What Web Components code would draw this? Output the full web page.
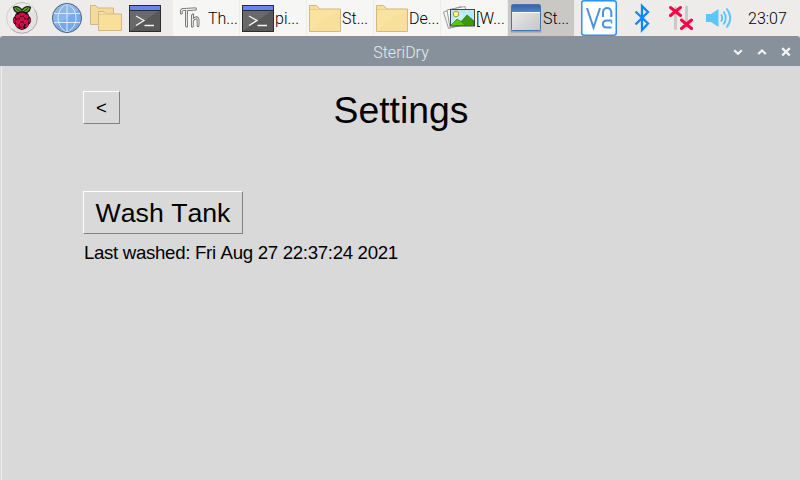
<!DOCTYPE html>
<html lang="en"><head><meta charset="utf-8"><title>SteriDry</title>
<style>html,body{margin:0;height:100%;overflow:hidden;background:#d9d9d9}</style></head>
<body><desk-screen></desk-screen>
<script>
const define=(name,html)=>{const t=document.createElement('template');t.innerHTML=html;
 customElements.define(name,class extends HTMLElement{constructor(){super();this.attachShadow({mode:'open'}).append(t.content.cloneNode(true));}});};

const folder='<path d="M1.5 5.5H8.5L12 9H32.5V31.5H1.5Z" fill="#f8e09b" stroke="#d3b782"/><path d="M2 9.5H11.5" stroke="#e7cd8a"/><path d="M2 31V10H32L12 21Z" fill="#fae5a5" opacity=".6"/>';
const icons={
raspberry:[32,34,`<circle cx="16" cy="17" r="15.3" fill="#e2e2e2" stroke="#aaa"/><path d="M5 28A15 15 0 0 1 16 2A15 15 0 0 1 29 8Z" fill="#f1f1f1" opacity=".6"/><g transform="translate(0 -1)">
<path d="M16 10C13 6 9 6 7.500 7.500C8 12 12 13.500 16 12.500C20 13.500 24 12 24.500 7.500C23 6 19 6 16 10Z" fill="#5ea52c" stroke="#172012" stroke-width="1.300"/><path d="M10 8.500L15 12L16 11L17 12L22 8.500" fill="none" stroke="#203516"/>
<path d="M16 12C20 11 23 14 23 16C26 18 25.500 23 23 24.500C22 28 18 29.500 16 30C14 29.500 10 28 9 24.500C6.500 23 6 18 9 16C9 14 12 11 16 12Z" fill="#1e0710"/>
<g fill="#d20e49"><ellipse cx="16" cy="14.300" rx="3" ry="1.700"/><ellipse cx="11.800" cy="16.500" rx="2.500" ry="2" transform="rotate(-35 11.800 16.500)"/><ellipse cx="20.200" cy="16.500" rx="2.500" ry="2" transform="rotate(35 20.200 16.500)"/><circle cx="16" cy="18.900" r="2.500"/><circle cx="12.200" cy="21.700" r="2.500"/><circle cx="19.800" cy="21.700" r="2.500"/><ellipse cx="8.400" cy="20.400" rx="1.200" ry="2.400"/><ellipse cx="23.600" cy="20.400" rx="1.200" ry="2.400"/><circle cx="16" cy="24.700" r="2.200"/><ellipse cx="11.300" cy="25.600" rx="1.500" ry="1.900" transform="rotate(-35 11.300 25.600)"/><ellipse cx="20.700" cy="25.600" rx="1.500" ry="1.900" transform="rotate(35 20.700 25.600)"/><ellipse cx="16" cy="28.300" rx="2" ry="1"/></g></g>`],
globe:[32,36,`<circle cx="16" cy="18" r="14.500" fill="#78a9e6"/><path d="M4 26A14.500 14.500 0 0 1 16 3.500A14.500 14.500 0 0 1 28 10Z" fill="#8cb5e8"/><path d="M16 3.500V32.500M2 13.500H30M2 22.500H30M16 3.500C4 10 4 26 16 32.500C28 26 28 10 16 3.500" fill="none" stroke="#d9e8fa"/><circle cx="16" cy="18" r="14.600" fill="none" stroke="#52677f"/>`],
folders:[34,36,`<path d="M1.500 5.500H6.500L9 8H24.500V24.500H1.500Z" fill="#f3dc9b" stroke="#d3b782"/><path d="M9.500 11.500H15L17.500 14H32.500V30.500H9.500Z" fill="#f8e09b" stroke="#d3b782"/><path d="M10 14.500H17" stroke="#e7cd8a"/>`],
folder:[34,36,folder],
terminal:[34,36,`<rect x="1.500" y="5.500" width="31" height="26" fill="#585858" stroke="#2c2c2c"/><path d="M2 10H32L2 31Z" fill="#696969"/><rect x="2" y="6" width="30" height="4" fill="#6686ed"/><path d="M2 10.500H32" stroke="#282a38"/><path d="M8 16L16 20.500L8 25.500M16.500 25.500H26" fill="none" stroke="#f4f4f4" stroke-width="1.300"/>`],
thonny:[34,36,`<g fill="none" stroke-linecap="round" stroke-linejoin="round" transform="translate(.3 0) scale(.88 1)"><path d="M8 13C7 10 9 9.500 11 9.500L24 9M14.500 10C13 14 13.500 20 14 26M21 15C20 18 20.500 22 20.500 26M20.500 21C23 17 27 17 27 20V25.500" stroke="#555" stroke-width="3"/><path d="M8 13C7 10 9 9.500 11 9.500L24 9M14.500 10C13 14 13.500 20 14 26M21 15C20 18 20.500 22 20.500 26M20.500 21C23 17 27 17 27 20V25.500" stroke="#f1f1ef" stroke-width="1.300"/></g>`],
photos:[34,36,`<path d="M1.500 12L19 6.500L24 24L6.500 28.500Z" fill="#f5f5f5" stroke="#999"/><path d="M5 10L23 6.500L26 24L8 27.500Z" fill="#fff" stroke="#999"/><rect x="8.500" y="9.500" width="24" height="16.500" fill="#b8e9fc" stroke="#444"/><path d="M9 21L18 12L32 25.500H9Z" fill="#c6effb"/><circle cx="14" cy="14" r="2.800" fill="#fff48e" stroke="#a8943b"/><path d="M16 25L25 15L32 21V25.500H14Z" fill="#3c9a0c" stroke="#245b0b" stroke-width=".6"/><path d="M9 25L15 19L20 22L23 25.500H9Z" fill="#5bc313" stroke="#2d6e0c" stroke-width=".6"/>`],
window:[34,36,`<defs><linearGradient id="b" x2="0" y2="1"><stop stop-color="#3465a4"/><stop offset="1" stop-color="#4e84c7"/></linearGradient><linearGradient id="g" x2="1" y2="1"><stop stop-color="#f0f0f0"/><stop offset="1" stop-color="#c5c5c5"/></linearGradient></defs><rect x="1.500" y="29.500" width="31" height="3" rx="1.500" fill="#888" opacity=".65"/><rect x="2.500" y="4.500" width="29" height="26" rx="1" fill="url(#g)" stroke="#4775ad"/><rect x="3" y="5" width="28" height="7" fill="url(#b)"/><path d="M3 12.500H31" stroke="#fff"/>`],
vnc:[36,36,`<rect x=".75" y=".75" width="34.500" height="34.500" rx="2.500" fill="#fff" stroke="#2f8ff5" stroke-width="1.500"/><path d="M6 8L12.500 27.500L19 8M22 17V12.500C22 6.500 30.300 6.500 30.300 12.500V17M30.500 20.500H26C20.500 20.500 20.500 27.500 26 27.500H30.500" fill="none" stroke="#4a93dc" stroke-width="2"/><path d="M30.500 20.500V23.500" fill="none" stroke="#4a93dc" stroke-width="1.500"/>`],
bluetooth:[18,36,`<path d="M2.500 11.500L15 23.500L9 30V6L15 12L2.500 24.500" fill="none" stroke="#0d86ff" stroke-width="2.300"/>`],
network:[26,36,`<path d="M8.500 8V28.500M19.500 7V27" stroke="#c9c9c9" stroke-width="3" stroke-linecap="round"/><path d="M3.500 7.500L13.500 15.500M13.500 7.500L3.500 15.500M14.500 20L24.500 28.500M24.500 20L14.500 28.500" stroke="#ff0048" stroke-width="3" stroke-linecap="round"/>`],
volume:[28,36,`<path d="M1 14H6L13.500 9V27L6 22H1Z" fill="#5cc6fb"/><path d="M16 14.500Q18.500 18 16 21.500M18.500 11.500Q23 18 18.500 24.500M21.500 8.500Q29 18 21.500 27.500" fill="none" stroke="#5cc6fb" stroke-width="1.900"/>`],
down:[12,12,'<path d="M2.200 5.200L6 8.700L9.800 5.200" fill="none" stroke="#f4f4f4" stroke-width="2.200"/>'],
up:[12,12,'<path d="M2.200 9L6 5.500L9.800 9" fill="none" stroke="#f4f4f4" stroke-width="2.200"/>'],
close:[12,12,'<path d="M2.200 3.200L9.800 10.500M9.800 3.200L2.200 10.500" stroke="#f4f4f4" stroke-width="2.300"/>']
};
customElements.define('ui-icon',class extends HTMLElement{constructor(){super();this.attachShadow({mode:'open'});}
 connectedCallback(){const [w,h,m]=icons[this.getAttribute('name')];
 this.shadowRoot.innerHTML=`<style>:host{display:block;flex:none}svg{display:block}</style><svg width="${w}" height="${h}" viewBox="0 0 ${w} ${h}" fill="none">${m}</svg>`;}});

define('task-button',`<style>:host{display:flex;align-items:center;box-sizing:border-box;width:67px;height:36px;padding-left:1px;background:#f6f6f5;border-right:1px solid #ececea;white-space:nowrap;overflow:hidden}:host([active]){width:66px;background:#c9c8c5;border-color:#c9c8c5}span{padding-top:1px}</style><slot name="icon"></slot><span><slot></slot></span>`);
define('task-bar',`<style>
:host{display:flex;height:36px;background:#edecea;font:300 16px/36px Roboto,sans-serif;color:#000}
.launch{display:flex;align-items:center;width:173px;box-sizing:border-box;padding-left:6px}
.globe{margin-left:13px}.folders{margin-left:6px}.term{margin-left:5px}
.tray{display:flex;align-items:center;padding-left:7px}
.bt{margin-left:16px}.net{margin-left:16px}.vol{margin-left:12px}.clock{margin-left:15px;padding-top:1px}
</style>
<div class="launch"><ui-icon name="raspberry"></ui-icon><ui-icon class="globe" name="globe"></ui-icon><ui-icon class="folders" name="folders"></ui-icon><ui-icon class="term" name="terminal"></ui-icon></div>
<task-button><ui-icon slot="icon" name="thonny"></ui-icon>Th...</task-button>
<task-button><ui-icon slot="icon" name="terminal"></ui-icon>pi...</task-button>
<task-button><ui-icon slot="icon" name="folder"></ui-icon>St...</task-button>
<task-button><ui-icon slot="icon" name="folder"></ui-icon>De...</task-button>
<task-button><ui-icon slot="icon" name="photos"></ui-icon>[W...</task-button>
<task-button active><ui-icon slot="icon" name="window"></ui-icon>St...</task-button>
<div class="tray"><ui-icon name="vnc"></ui-icon><ui-icon class="bt" name="bluetooth"></ui-icon><ui-icon class="net" name="network"></ui-icon><ui-icon class="vol" name="volume"></ui-icon><span class="clock">23:07</span></div>`);
define('title-bar',`<style>:host{display:grid;grid-template-columns:1fr auto 1fr;align-items:center;height:30px;background:#87919b;border-radius:3px 3px 0 0;color:#e9ebed;font:300 16px/30px Roboto,sans-serif}
.title{grid-column:2;padding:3px 0 0 2px;line-height:27px}.controls{display:flex;gap:12px;justify-content:flex-end;padding-right:8px}</style>
<span class="title"><slot></slot></span><div class="controls"><ui-icon name="down"></ui-icon><ui-icon name="up"></ui-icon><ui-icon name="close"></ui-icon></div>`);
define('push-button',`<style>:host{display:block}button{display:block;box-sizing:border-box;width:100%;height:100%;margin:0;padding:var(--drop,0) 0 0;border:1px solid;border-color:#fff #828282 #828282 #fff;background:#d9d9d9;color:#000;font:inherit;font-kerning:inherit;box-shadow:none}</style><button><slot></slot></button>`);
define('settings-view',`<style>
:host{display:block;box-sizing:border-box;height:414px;padding:25px 81px 0 82px;border-left:1px solid #d9d9d9;box-shadow:inset 1px 0 #eee;font-family:"Liberation Sans",Arial,sans-serif;font-kerning:none;color:#000;background:#d9d9d9}
header{display:grid;grid-template-columns:37px 1fr 37px;align-items:start}
.back{height:33px;font-size:18.667px}
h1{margin:-2px 0 0;font-size:37.333px;line-height:42px;font-weight:400;text-align:center}
.wash{--drop:1px;width:160px;height:43px;margin-top:60px;font-size:26.667px}
p{margin:8px 0 0 1px;font-size:18.667px;line-height:21px;letter-spacing:-.32px;white-space:nowrap}
</style>
<header><push-button class="back">&lt;</push-button><h1>Settings</h1></header>
<push-button class="wash">Wash Tank</push-button><p>Last washed: Fri Aug 27 22:37:24 2021</p>`);
define('desk-screen',`<style>:host{display:block;width:800px;height:480px;overflow:hidden;background:#edecea}</style><task-bar></task-bar><title-bar>SteriDry</title-bar><settings-view></settings-view>`);
</script></body></html>
